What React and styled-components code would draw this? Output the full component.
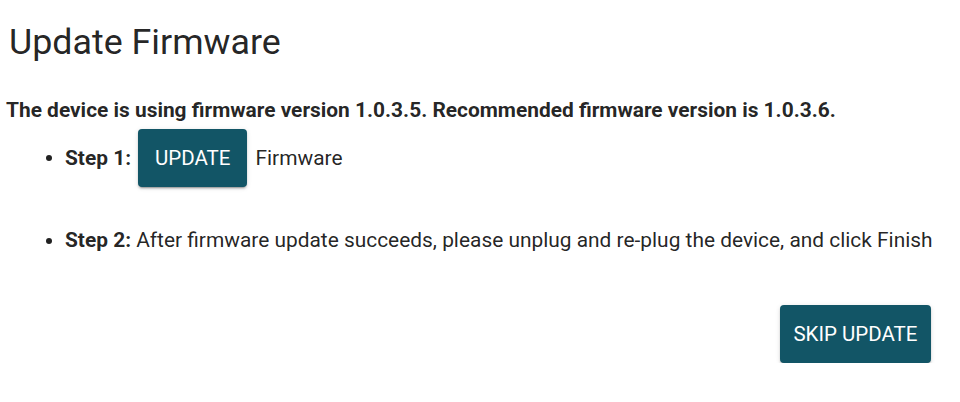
import React from "react"
import styled, { createGlobalStyle } from 'styled-components'

const GlobalStyle = createGlobalStyle`
  body {
    margin: 0;
    background: #fff;
    font-family: Roboto, "Liberation Sans", sans-serif;
    color: rgba(0, 0, 0, 0.87);
  }
`

const Page = styled.div`
  padding: 20px 29px 0 6px;
`

const Title = styled.h1`
  margin: 0 0 0 3px;
  font-size: 35.8px;
  font-weight: 400;
  line-height: 44px;
`

const Notice = styled.p`
  margin: 34px 0 0;
  font-size: 20.9px;
  font-weight: 700;
  line-height: 24px;
  white-space: nowrap;
`

const Steps = styled.ul`
  margin: 0;
  padding: 0 0 0 59px;
  font-size: 20.9px;
  line-height: 24px;
  white-space: nowrap;
`

const Step = styled.li`
  margin-top: ${p => p.gap}px;
`

const StepRow = styled.span`
  display: inline-flex;
  align-items: center;
  vertical-align: middle;
  gap: 7px;
  span {
    margin-left: 1px;
  }
`

const ActionButton = styled.button`
  font-family: Roboto, "Liberation Sans", sans-serif;
  font-size: 20.5px;
  font-weight: 400;
  color: #fff;
  background: #125566;
  border: none;
  border-radius: 4px;
  padding: 0 ${p => p.pad}px;
  height: 58px;
  box-shadow: 0 3px 1px -2px rgba(0,0,0,.2), 0 2px 2px 0 rgba(0,0,0,.14), 0 1px 5px 0 rgba(0,0,0,.12);
  cursor: pointer;
`

const Footer = styled.div`
  display: flex;
  justify-content: flex-end;
  margin-top: 53px;
`

export default function App() {
  return (
    <>
      <GlobalStyle />
      <Page>
        <Title>Update Firmware</Title>
        <Notice>The device is using firmware version 1.0.3.5. Recommended firmware version is 1.0.3.6.</Notice>
        <Steps>
          <Step gap={7}>
            <StepRow>
              <b>Step 1:</b>
              <ActionButton pad={17}>UPDATE</ActionButton>
              <span>Firmware</span>
            </StepRow>
          </Step>
          <Step gap={41}>
            <b>Step 2:</b> After firmware update succeeds, please unplug and re-plug the device, and click Finish
          </Step>
        </Steps>
        <Footer>
          <ActionButton pad={13.5}>SKIP UPDATE</ActionButton>
        </Footer>
      </Page>
    </>
  )
}
